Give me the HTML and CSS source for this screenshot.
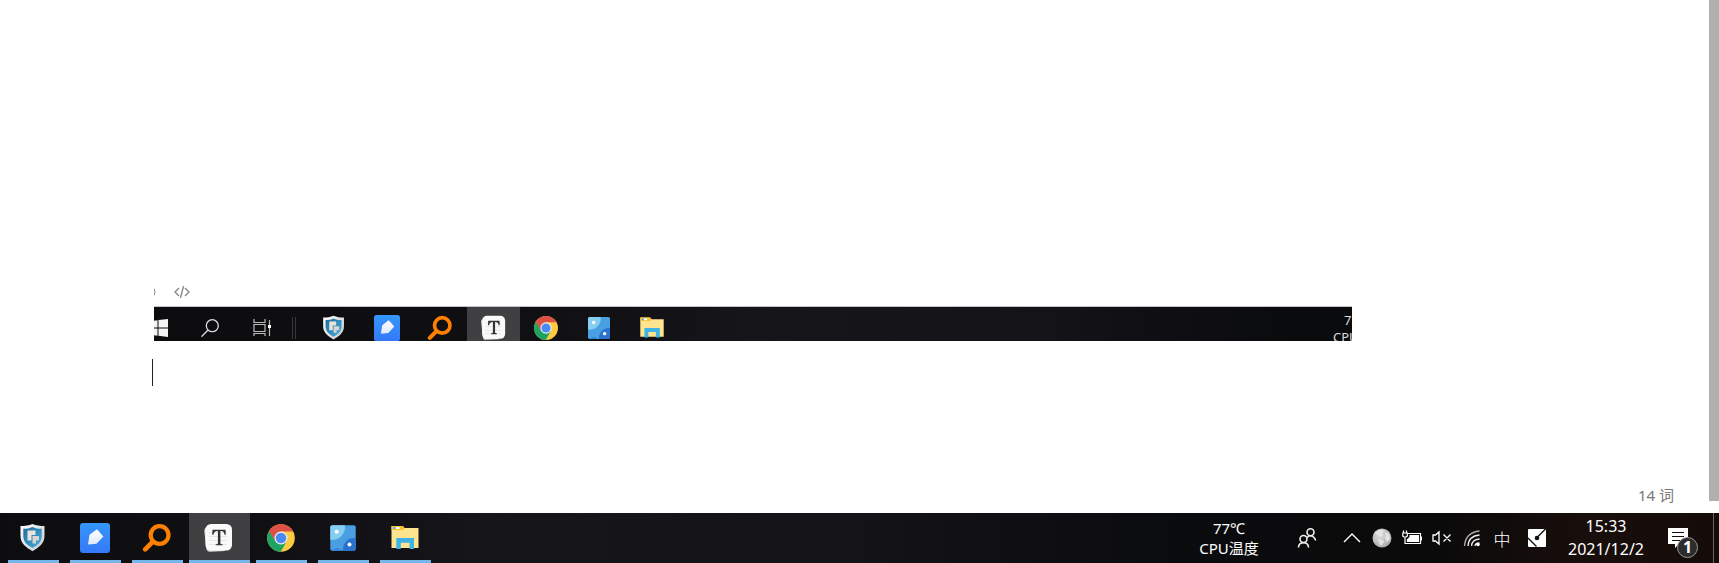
FILE: index.html
```html
<!DOCTYPE html>
<html lang="zh-CN">
<head>
<meta charset="utf-8">
<title>Typora</title>
<link rel="stylesheet" href="styles.css">
</head>
<body>
<svg class="defs" aria-hidden="true">
  <defs>
    <linearGradient id="g-blue" x1="0" y1="0" x2="0" y2="1"><stop offset="0" stop-color="#3596fc"/><stop offset="1" stop-color="#3579f8"/></linearGradient>
    <linearGradient id="g-rim" x1="0" y1="0" x2="1" y2="1"><stop offset="0" stop-color="#fff"/><stop offset="1" stop-color="#c4c6c9"/></linearGradient>
    <linearGradient id="g-shield" x1="0" y1="0" x2="1" y2="1"><stop offset="0" stop-color="#1f6d9c"/><stop offset="1" stop-color="#44aede"/></linearGradient>
    <linearGradient id="g-pen" x1="0" y1="0" x2="0" y2="1"><stop offset="0" stop-color="#fff"/><stop offset="1" stop-color="#dfe9fb"/></linearGradient>
    <radialGradient id="g-globe" cx=".4" cy=".35" r=".7"><stop offset="0" stop-color="#ddd"/><stop offset="1" stop-color="#aaa"/></radialGradient>
    <clipPath id="c-pic"><rect x="2.3" y="2.3" width="25.4" height="25.4" rx="2"/></clipPath>
    <clipPath id="c-chrome"><circle cx="15" cy="15" r="13.8"/></clipPath>
  </defs>
  <symbol id="shield" viewBox="0 0 30 30">
    <path d="M14.500 1C11 2.600 7 3 2.500 3V13c0 8 6 11.500 12 15.200C20.500 24.500 26.500 21 26.500 13V3C22 3 18 2.600 14.500 1z" fill="url(#g-rim)"/>
    <path d="M14.500 4C12 5.300 9 5.800 5.300 5.800V13c0 6 4 9 9.200 12 5.200-3 9.200-6 9.200-12V5.800C20 5.800 17 5.300 14.500 4z" fill="url(#g-shield)"/>
    <path d="M9.500 7.500h8v4.500h-4v5.500h-4z" fill="#e9e3dc"/><path d="M14.500 13h6.500v4.500h-3v3h-3.500z" fill="#d9d6d2"/>
  </symbol>
  <symbol id="pen" viewBox="0 0 30 30">
    <rect width="30" height="30" rx="3" fill="url(#g-blue)"/>
    <path d="M8 21.500 9.500 11.800 17 6.200 23.400 13.400 16.500 20.800z" fill="url(#g-pen)"/>
  </symbol>
  <symbol id="everything" viewBox="0 0 30 30">
    <circle cx="17.600" cy="12" r="8.900" fill="none" stroke="#ff8000" stroke-width="4.200"/>
    <path d="M10.500 19 3.200 26.300" stroke="#ff8000" stroke-width="4.600" stroke-linecap="round"/>
  </symbol>
  <symbol id="typora" viewBox="0 0 30 30">
    <path d="M5 3 2 5.500Q1 6.500 1.400 9L3.200 25Q3.600 28.800 7 28.700L22 28z" fill="#dcdcdb"/>
    <rect x="2.500" y="1" width="26.500" height="26.500" rx="5.500" fill="#fafafa"/>
    <path d="M6 9.500h18M6 13.500h18M6 17.500h18M6 21.500h18" stroke="#e6e6e6"/>
    <path d="M9.500 6.700h13l.3 5h-1.200c-.6-2.700-1.200-3.700-4.200-3.700v11.700c0 1.200.6 1.400 2.200 1.600v1H12.700v-1c1.600-.2 2.200-.4 2.200-1.600V8c-3 0-3.800 1-4.400 3.700H9.200z" fill="#333"/>
  </symbol>
  <symbol id="chrome" viewBox="0 0 30 30">
    <g clip-path="url(#c-chrome)">
      <rect width="30" height="30" fill="#fdcb42"/>
      <path d="M0 0H30V8.500H15L9 18 2 7z" fill="#dd5144"/>
      <path d="M2.500 7 9.300 18.300Q14 23 20.700 18.300L14 30H0V8z" fill="#1da462"/>
    </g>
    <circle cx="15" cy="15" r="6.500" fill="#f3f3f3"/><circle cx="15" cy="15" r="5.300" fill="#4a8af4"/>
  </symbol>
  <symbol id="bubbles" viewBox="0 0 30 30">
    <g clip-path="url(#c-pic)">
      <rect width="30" height="30" fill="#4a9fe3"/>
      <circle cx="4" cy="4" r="13" fill="#86cdf2"/><circle cx="26" cy="26" r="11" fill="#2b72d0"/>
      <circle cx="9" cy="29" r="4" fill="#3587d8"/>
      <circle cx="8.700" cy="8.700" r="2" fill="#fff"/><circle cx="21.500" cy="21.500" r="2" fill="#fff"/>
    </g>
  </symbol>
  <symbol id="folder" viewBox="0 0 30 30">
    <path d="M1.500 3h11l2 2H28.500v20H1.500z" fill="#ffe48f"/>
    <path d="M1.500 3h11.500l1.500 2-1.500 2H1.500z" fill="#fac02d"/><path d="M3.500 4h6v2h-6z" fill="#fff"/><path d="M3.500 4h2v2h-2z" fill="#31a6de"/>
    <path d="M6.300 26V15H24v11h-4.500v-6.300h-8.700V26z" fill="#3db3e8"/>
  </symbol>
</svg>

<main class="editor">
  <section class="page">
    <div class="tools">
      <svg class="arc" viewBox="0 0 3 10" fill="none" stroke="#888"><path d="M0 1.500Q2 5 0 8.500"/></svg>
      <button class="code" aria-label="源代码">
        <svg viewBox="0 0 16 12" fill="none" stroke="#888" stroke-width="1.400"><path d="M5 2 1 6l4 4M11 2l4 4-4 4M9.500 0 6.500 12"/></svg>
      </button>
    </div>
    <figure class="shot">
      <svg class="win" viewBox="0 0 14 18" fill="#f4f4f4"><path d="M0 1.700 3.500 1.200V8.500H0zM4.500 1 14 0V8.500H4.500zM0 9.500h3.500v7.300L0 16.300zM4.500 9.500H14V18l-9.500-1.200z"/></svg>
      <svg class="find" viewBox="0 0 18 18" fill="none" stroke="#ddd" stroke-width="1.300"><circle cx="11.300" cy="6.700" r="6"/><path d="M7 11 .5 17.700"/></svg>
      <svg class="views" viewBox="0 0 18 18" fill="none" stroke="#bbb" stroke-width="1.200"><path d="M1 0v3.500h11V0M1 17v-2.500h11V17M1 5.500h11v7H1zM16.500 1v16"/><path d="M15 6h3v3h-3z" fill="#fff" stroke="none"/></svg>
      <span class="grip"></span>
      <div class="shot-apps">
        <span class="shot-cell"><svg><use href="#shield"/></svg></span>
        <span class="shot-cell"><svg><use href="#pen"/></svg></span>
        <span class="shot-cell"><svg><use href="#everything"/></svg></span>
        <span class="shot-cell current"><svg><use href="#typora"/></svg></span>
        <span class="shot-cell"><svg><use href="#chrome"/></svg></span>
        <span class="shot-cell"><svg><use href="#bubbles"/></svg></span>
        <span class="shot-cell"><svg><use href="#folder"/></svg></span>
      </div>
      <div class="shot-temp"><div class="shot-text">77℃<br>CPU温度</div></div>
    </figure>
    <div class="caret"></div>
    <div class="count">14 词</div>
  </section>
  <div class="scroll"><div class="thumb"></div></div>
</main>

<footer class="taskbar">
  <nav class="apps">
    <button class="app" aria-label="安全卫士"><svg><use href="#shield"/></svg></button>
    <button class="app" aria-label="笔记"><svg><use href="#pen"/></svg></button>
    <button class="app" aria-label="Everything"><svg><use href="#everything"/></svg></button>
    <button class="app current" aria-label="Typora"><svg><use href="#typora"/></svg></button>
    <button class="app" aria-label="Chrome"><svg><use href="#chrome"/></svg></button>
    <button class="app" aria-label="图片"><svg><use href="#bubbles"/></svg></button>
    <button class="app" aria-label="文件资源管理器"><svg><use href="#folder"/></svg></button>
  </nav>
  <div class="tray">
    <div class="temp">77℃<br>CPU温度</div>
    <button class="people" aria-label="人脉"><svg width="20" height="20" viewBox="0 0 20 20" fill="none" stroke="#f2f2f2" stroke-width="1.600"><circle cx="13.500" cy="4.300" r="3.500"/><path d="M10 9.500q3.500-3.500 7 0 1.500 1.500 1.500 3"/><circle cx="6.500" cy="11" r="3.500"/><path d="M1.500 19.500q0-4.800 5-4.800t5 4.800"/></svg></button>
    <div class="icons">
      <button aria-label="显示隐藏的图标"><svg width="18" height="10" viewBox="0 0 18 10" fill="none" stroke="#fff" stroke-width="1.400"><path d="M1 9 9 1l8 8"/></svg></button>
      <button aria-label="网络"><svg width="20" height="20" viewBox="0 0 20 20"><circle cx="10" cy="10" r="9.500" fill="url(#g-globe)"/><path d="M7 2q4-1 5 1l-2 2 1 2-3 2-3-2-2-2zM13 4l4 2 1 5-3 3-2-4 1-2zM6 11l5 1 1 2-3 4-2-3z" fill="#e4e4e4"/></svg></button>
      <button aria-label="电池"><svg width="20" height="16" viewBox="0 0 20 16" fill="none" stroke="#fff" stroke-width="1.200"><path d="M6 3.500h12.500v10h-15.500V8M1.500.5V3M4.500 .5V3M.8 3h4.500v3q-2.300 2.500-4.500 0z"/><path d="M7.500 5H17v7H4.800V9.500L7.500 7zM18.500 6.500H20v4h-1.500z" fill="#fff" stroke="none"/></svg></button>
      <button aria-label="静音"><svg width="20" height="16" viewBox="0 0 20 16" fill="none" stroke="#fff" stroke-width="1.300"><path d="M1 5h2.500L7 2v12L3.500 11H1zM11.500 4.500l7 7M18.500 4.500l-7 7"/></svg></button>
      <button aria-label="无线网络"><svg width="18" height="18" viewBox="0 0 18 18" fill="none" stroke="#eee" stroke-width="1.300"><path d="M1.500 17Q2.500 3.500 16.500 2" stroke="#aaa"/><path d="M5 17Q5.500 7 16.500 6M8.500 17q.5-6.500 8-7M12 17q0-3 4.500-3.200"/><circle cx="15" cy="15.500" r="1.800" fill="#fff" stroke="none"/></svg></button>
      <button class="ime">中</button>
    </div>
    <button class="pad" aria-label="输入法"><svg width="18" height="18" viewBox="0 0 18 18"><rect width="18" height="18" rx="1" fill="#fff"/><path d="M0 9l8.500 8.500M8 9.500 17.500 0" stroke="#111" stroke-width="1.400"/><circle cx="9" cy="9" r="2.300" fill="#111"/></svg></button>
    <time class="clock">15:33<br>2021/12/2</time>
    <button class="notice" aria-label="通知"><svg width="20" height="20" viewBox="0 0 20 20"><path d="M0 0h20v16h-9l-4 4v-4H0z" fill="#fff"/><path d="M4 4.500h12M4 8.500h12M4 12.500h8" stroke="#160d0b" stroke-width="1.200"/></svg><span class="badge">1</span></button>
    <span class="desktop"></span>
  </div>
</footer>
</body>
</html>
```
FILE: styles.css
```css
* { box-sizing: border-box; }
body {
  margin: 0;
  height: 100vh;
  display: flex;
  flex-direction: column;
  background: #fff;
  font-family: "Noto Sans", "Noto Sans CJK SC", sans-serif;
  overflow: hidden;
}
button {
  border: 0;
  padding: 0;
  background: none;
  color: inherit;
  font: inherit;
  display: flex;
  align-items: center;
  justify-content: center;
}
svg { display: block; }
.defs { position: absolute; width: 0; height: 0; }

.editor { flex: 1; display: flex; min-height: 0; }
.page {
  flex: 1;
  display: flex;
  flex-direction: column;
  padding: 284px 35px 0 152px;
}
.tools { display: flex; align-items: center; height: 16px; padding-left: 2px; }
.arc { width: 3px; height: 10px; }
.code { margin-left: 17px; }
.code svg { width: 16px; height: 12px; }
.shot {
  margin: 6px 322px 0 2px;
  height: 35px;
  display: flex;
  align-items: flex-start;
  overflow: hidden;
  border-top: 1px solid #c4c4c6;
  background: linear-gradient(90deg, #0c0c0e, #100f12 30%, #15151a 50%, #131318 75%, #0a0b0d 95%);
}
.shot > svg { flex: none; height: 18px; margin-top: 12px; }
.win { width: 14px; }
.find { width: 18px; margin-left: 33px; }
.views { width: 18px; margin-left: 34px; }
.grip {
  width: 4px;
  height: 22px;
  margin: 10px 11px 0 21px;
  border: solid #38383b;
  border-width: 0 1px;
}
.shot-apps { display: flex; padding-left: 1px; }
.shot-cell { width: 53px; height: 34px; padding: 8px 0 0 13px; }
.shot-cell svg { width: 26px; height: 26px; }
.current { background: #403f41; }
.shot-temp { width: 19px; margin-left: auto; padding-top: 5px; }
.shot-text {
  width: 50px;
  color: #ddd;
  font-size: 13px;
  line-height: 17px;
  text-align: center;
  white-space: nowrap;
}
.caret { width: 1px; height: 27px; margin-top: 18px; background: #222; }
.count {
  margin-top: auto;
  padding-bottom: 7px;
  align-self: flex-end;
  color: #777;
  font-size: 15px;
  line-height: 22px;
}
.scroll { width: 10px; padding-bottom: 12px; }
.thumb { height: 100%; background: #b0b0b0; }

.taskbar {
  flex: none;
  height: 50px;
  display: flex;
  justify-content: space-between;
  color: #fff;
  background: linear-gradient(90deg, #0d0d0f, #100f12 14%, #15151a 28%, #131318 50%, #0a0b0d 70%, #0b0a0b 84%, #180e0b 92%, #150c0a);
}
.apps { display: flex; padding-left: 3px; }
.app { width: 62px; position: relative; padding-right: 2px; }
.app svg { width: 30px; height: 30px; }
.app::after {
  content: "";
  position: absolute;
  left: 5px;
  right: 6px;
  bottom: 0;
  height: 3px;
  background: #75b7ea;
}
.app.current { width: 61px; margin-right: 1px; padding-right: 3px; }
.app.current::after { left: 0; right: 0; }

.tray { display: flex; align-items: center; }
.temp, .clock { text-align: center; white-space: nowrap; }
.temp { width: 64px; font-size: 15px; line-height: 20px; }
.people { margin-left: 36px; }
.icons { display: flex; margin-left: 20px; }
.icons button { width: 30px; height: 24px; }
.icons .ime {
  font-family: "Noto Sans CJK SC", sans-serif;
  font-size: 17px;
  font-weight: 300;
}
.pad { margin-left: 11px; }
.clock { width: 80px; margin-left: 20px; font-size: 16px; line-height: 23px; }
.notice { position: relative; margin-left: 22px; }
.badge {
  position: absolute;
  left: 9px;
  top: 9px;
  width: 21px;
  height: 21px;
  border: 1px solid #999;
  border-radius: 50%;
  background: #2c2c2c;
  font-size: 16px;
  font-weight: 700;
  line-height: 18px;
  text-align: center;
}
.desktop { align-self: stretch; width: 1px; margin: 0 5px 0 25px; background: #6a6462; }
```
